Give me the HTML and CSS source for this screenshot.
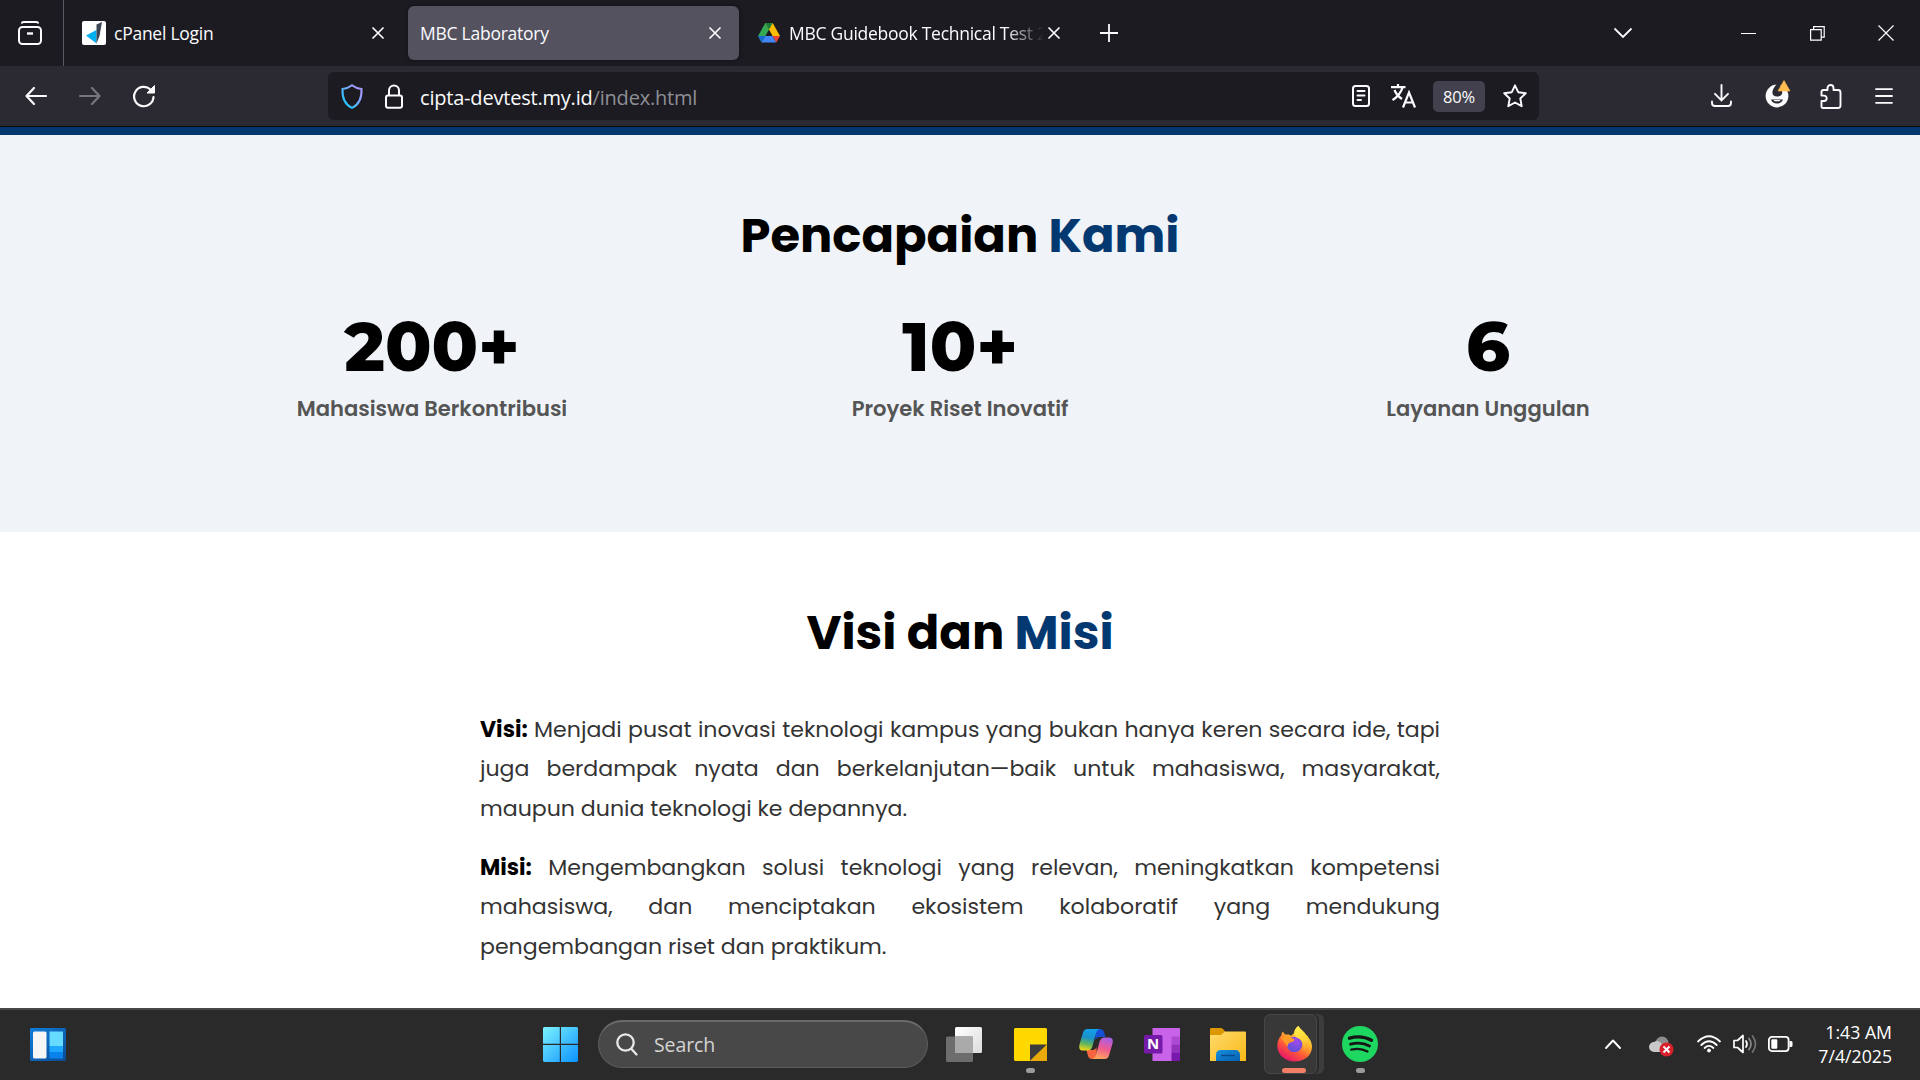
FILE: index.html
```html
<!DOCTYPE html>
<html lang="id">
<head>
<meta charset="utf-8">
<title>MBC Laboratory</title>
<link rel="stylesheet" href="styles.css">
</head>
<body>
<div class="screen">
  <div class="tabbar">
    <div class="view-btn">
      <svg width="24" height="24" viewBox="0 0 24 24" fill="none" stroke="#fbfbfe" stroke-width="2" stroke-linecap="round"><path d="M4 1.8Q4.5 1 6 1H18Q19.500 1 20 1.800"/><rect x="1" y="6" width="22" height="17" rx="3.500"/><path d="M9 12.500h6" stroke-width="2.400" stroke-linecap="butt"/></svg>
    </div>
    <div class="tab tab-cpanel">
      <svg width="24" height="24" viewBox="0 0 24 24"><rect width="24" height="24" rx="2" fill="#fff"/><path d="M4 14.500 14.500 9V22.500Z" fill="#00aef2"/><path d="M14.500 3.500 20 1 17.500 15 14.500 22.500Z" fill="#3c4654"/></svg>
      <span class="tab-title">cPanel Login</span>
      <svg class="tab-close" width="14" height="14" viewBox="0 0 14 14"><path d="M1.500 1.500l11 11M12.500 1.500l-11 11"/></svg>
    </div>
    <div class="tab tab-active">
      <span class="tab-title">MBC Laboratory</span>
      <svg class="tab-close" width="14" height="14" viewBox="0 0 14 14"><path d="M1.500 1.500l11 11M12.500 1.500l-11 11"/></svg>
    </div>
    <div class="tab tab-drive">
      <svg width="22" height="20" viewBox="0 0 22 20"><path d="M7.300 0 0 13 3.700 19.500 11 6.500Z" fill="#34a853"/><path d="M14.700 0 22 13H14.600L7.300 0Z" fill="#fbbc04"/><path d="M7.300 0H14.700L11 6.500Z" fill="#188038"/><path d="M0 13H7.400L3.700 19.500Z" fill="#1967d2"/><path d="M7.400 13H14.600L18.300 19.500H3.700Z" fill="#4285f4"/><path d="M14.600 13H22L18.300 19.500Z" fill="#ea4335"/></svg>
      <span class="tab-title tab-title-fade">MBC Guidebook Technical Test 2</span>
      <svg class="tab-close" width="14" height="14" viewBox="0 0 14 14"><path d="M1.500 1.500l11 11M12.500 1.500l-11 11"/></svg>
    </div>
    <svg class="new-tab" width="18" height="18" viewBox="0 0 18 18"><path d="M9 0v18M0 9h18"/></svg>
    <div class="window-btns">
      <svg width="20" height="12" viewBox="0 0 20 12" fill="none" stroke="#fbfbfe" stroke-width="1.800"><path d="M1.500 1.500 10 10l8.500-8.500"/></svg>
      <svg class="win-min" width="15" height="15" viewBox="0 0 15 15" fill="none" stroke="#fff" shape-rendering="crispEdges"><path d="M0 7.500h15"/></svg>
      <svg class="win-max" width="15" height="15" viewBox="0 0 15 15" fill="none" stroke="#fff" stroke-width="1.200"><path d="M.6 3.600h10.600v10.600H.6zM3.600 3.600V.6h10.600v10.600h-3"/></svg>
      <svg class="win-close" width="16" height="16" viewBox="0 0 16 16" fill="none" stroke="#fff" stroke-width="1.200"><path d="M.5.5l15 15M15.500.5l-15 15"/></svg>
    </div>
  </div>

  <div class="toolbar">
    <svg class="nav-back" width="22" height="18" viewBox="0 0 22 18"><path d="M9 1 1.500 9 9 17M1.500 9H21"/></svg>
    <svg class="nav-fwd" width="22" height="18" viewBox="0 0 22 18"><path d="M13 1l7.500 8L13 17M20.500 9H1"/></svg>
    <svg class="nav-reload" width="24" height="24" viewBox="0 0 24 24"><path d="M21.500 13A9.700 9.700 0 1 1 18.500 5.500" fill="none" stroke="#fbfbfe" stroke-width="2.200" stroke-linecap="round"/><path d="M22.500 1.500V9H15Z" fill="#fbfbfe" stroke="#fbfbfe" stroke-linejoin="round"/></svg>
    <div class="urlbar">
      <svg width="22" height="25" viewBox="0 0 22 25"><defs><linearGradient id="sh" x1="0" y1="1" x2="1" y2="0"><stop offset=".2" stop-color="#2ac3ff"/><stop offset=".8" stop-color="#a59bff"/></linearGradient></defs><path d="M11 1.200C8 3.500 5 4.600 1.500 5c-.4 9 2 15.500 9.500 18.800C18.500 20.500 20.900 14 20.500 5 17 4.600 14 3.500 11 1.200Z" fill="none" stroke="url(#sh)" stroke-width="2"/></svg>
      <svg class="lock" width="18" height="25" viewBox="0 0 18 25" fill="none" stroke="#fbfbfe" stroke-width="2"><rect x="1" y="11.500" width="16" height="12.300" rx="2"/><path d="M4 11V6.500a5 5 0 0 1 10 0V11"/></svg>
      <span class="url"><span class="host">cipta-devtest.my.id</span><span class="path">/index.html</span></span>
      <svg width="18" height="22" viewBox="0 0 18 22" fill="none" stroke="#fbfbfe" stroke-width="2" stroke-linecap="round"><rect x="1" y="1" width="16" height="20" rx="2.500"/><path d="M5.500 6h7M5.500 10.500h7M5.500 15h3.500"/></svg>
      <svg class="translate" width="25" height="24" viewBox="0 0 25 24" fill="none" stroke="#fbfbfe" stroke-width="2.200"><path d="M0 3.200h14.500M7 0v3.500M11.500 3.500C10.500 8 6 13.500 1.500 16M3.500 6C5 10 8 13 11 15"/><path d="M12 23.500 18 8.500l6 15M14.200 18.500h7.600"/></svg>
      <span class="zoom-chip">80%</span>
      <svg width="24" height="24" viewBox="0 0 24 24" fill="none" stroke="#fbfbfe" stroke-width="1.900" stroke-linejoin="round"><path d="M12 1.300 15.200 8.200 22.800 9.200 17.300 14.500 18.700 22.200 12 18.500 5.300 22.200 6.700 14.500 1.200 9.200 8.800 8.200Z"/></svg>
    </div>
    <div class="tools">
      <svg width="21" height="24" viewBox="0 0 21 24" fill="none" stroke="#fbfbfe" stroke-width="1.900" stroke-linecap="round"><path d="M10.500 1v15M4 9.800l6.500 6.500L17 9.800M1 17.500v1.500q0 3 3 3h13q3 0 3-3v-1.500"/></svg>
      <svg class="ext-g" width="26" height="28" viewBox="0 0 26 28"><circle cx="12" cy="16" r="11.400" fill="#fbfbfe"/><path d="M11.500 4 8.500 8.500C6 13.500 8 16.500 12 16.500s6-2.500 5-5L19 10 14 4Z" fill="#2b2a33"/><path d="M6 19.500h12q-1.500 4-6 4t-6-4Z" fill="#2b2a33"/><path d="M8.500 20h7l-1 1.300h-5Z" fill="#fbfbfe"/><path d="M19 .5 25 11H13Z" fill="#ffbd4f" stroke="#ffbd4f" stroke-width=".6" stroke-linejoin="round"/></svg>
      <svg class="ext-p" width="22" height="25" viewBox="0 0 22 25" fill="none" stroke="#fbfbfe" stroke-width="1.900" stroke-linejoin="round"><path d="M7.500 6V4a3 3 0 0 1 6 0v2H18q2.500 0 2.500 2.500v13Q20.500 24 18 24H3q-1.500 0-1.500-1.500V17H4a2.700 2.700 0 0 0 0-5.400H1.500V8Q1.500 6 3.500 6Z"/></svg>
      <svg class="menu" width="18" height="16" viewBox="0 0 18 16" stroke="#fbfbfe" stroke-width="1.800" stroke-linecap="round"><path d="M1 1.200h16M1 8h16M1 14.800h16"/></svg>
    </div>
  </div>

  <main class="page">
    <section class="stats">
      <h2 class="heading">Pencapaian <span class="accent">Kami</span></h2>
      <div class="stat-grid">
        <div class="stat"><div class="num">200+</div><div class="label">Mahasiswa Berkontribusi</div></div>
        <div class="stat"><div class="num">10+</div><div class="label">Proyek Riset Inovatif</div></div>
        <div class="stat"><div class="num">6</div><div class="label">Layanan Unggulan</div></div>
      </div>
    </section>
    <section class="vision">
      <h2 class="heading">Visi dan <span class="accent">Misi</span></h2>
      <p class="para"><strong>Visi:</strong> Menjadi pusat inovasi teknologi kampus yang bukan hanya keren secara ide, tapi juga berdampak nyata dan berkelanjutan—baik untuk mahasiswa, masyarakat, maupun dunia teknologi ke depannya.</p>
      <p class="para"><strong>Misi:</strong> Mengembangkan solusi teknologi yang relevan, meningkatkan kompetensi mahasiswa, dan menciptakan ekosistem kolaboratif yang mendukung pengembangan riset dan praktikum.</p>
    </section>
  </main>

  <footer class="taskbar">
    <svg class="widgets" width="36" height="33" viewBox="0 0 36 33"><defs><linearGradient id="wg" x1="0" y1="0" x2="1" y2="1"><stop stop-color="#0f7fdc"/><stop offset="1" stop-color="#0b4a94"/></linearGradient></defs><rect width="36" height="33" rx="1.500" fill="url(#wg)"/><rect x="3" y="3.500" width="13.500" height="27" rx="1.500" fill="#f6f6f6"/><path d="M19.500 3.500H33V18H19.500Z" fill="#67dbff"/><path d="M19.500 18H33v6H19.500Z" fill="#1ea7ff"/><path d="M19.500 24H33v6.500H19.500Z" fill="#0883ee"/></svg>
    <svg class="start" width="35" height="35" viewBox="0 0 35 35"><defs><linearGradient id="wn" gradientUnits="userSpaceOnUse" x1="0" y1="0" x2="35" y2="35"><stop stop-color="#7df3ff"/><stop offset="1" stop-color="#0a92ff"/></linearGradient></defs><path d="M1 0H16.800V16.800H0V1ZM18 0H34l1 1V16.800H18ZM0 18H16.800V35H1l-1-1ZM18 18H35V34l-1 1H18Z" fill="url(#wn)"/></svg>
    <div class="search">
      <svg width="22" height="23" viewBox="0 0 22 23" fill="none" stroke="#e8e8e8" stroke-width="2.300" stroke-linecap="round"><circle cx="9.500" cy="9.500" r="8.200"/><path d="M15.300 15.800 20.500 21.500"/></svg>
      <span>Search</span>
    </div>
    <div class="apps">
      <div class="app"><svg width="36" height="35" viewBox="0 0 36 35"><defs><linearGradient id="tv" x1="0" y1="0" x2="1" y2="1"><stop stop-color="#fff"/><stop offset="1" stop-color="#dcdcdc"/></linearGradient></defs><rect x="9" y="0" width="27" height="26" rx="1.500" fill="url(#tv)"/><rect x="0" y="9.500" width="27" height="25.500" rx="1.500" fill="#6d6d6d"/><path d="M9 9.500H27V26H9Z" fill="#aaa"/></svg></div>
      <div class="app"><svg width="33" height="33" viewBox="0 0 33 33"><path d="M1 0H32l1 1V33H1L0 32V1Z" fill="#ffd800"/><path d="M16 16.500H33L16 33Z" fill="#3b3b3b"/><path d="M33 16.500V33H16Z" fill="#e9a90b"/></svg><i class="dot"></i></div>
      <div class="app"><svg width="34" height="32" viewBox="0 0 34 32"><defs><linearGradient id="c1" x1=".5" y1="0" x2=".3" y2="1"><stop stop-color="#12a0ee"/><stop offset=".4" stop-color="#1b91c8"/><stop offset=".7" stop-color="#62b65c"/><stop offset="1" stop-color="#f3da17"/></linearGradient><linearGradient id="c2" x1=".7" y1="0" x2=".4" y2="1"><stop stop-color="#a45fe8"/><stop offset=".5" stop-color="#ef5a92"/><stop offset="1" stop-color="#ffa65a"/></linearGradient></defs><path d="M16 1h5q3 0 4 3l1.500 5h-6q-3 0-4 3Z" fill="#174fd4"/><path d="M18 31h-5q-3 0-4-3L7.500 22h6q3 0 4-3Z" fill="#f7663f"/><path d="M8.500 1H21q-3 .5-4 4L13.500 18q-1.200 4.500-5 4.500H4q-5 0-3.500-6L4 4.500Q5 1 8.500 1Z" fill="url(#c1)"/><path d="M25.500 31H13q3-.5 4-4L20.500 14q1.200-4.500 5-4.500H30q5 0 3.500 6L30 27.500Q29 31 25.500 31Z" fill="url(#c2)"/></svg></div>
      <div class="app"><svg width="36" height="33" viewBox="0 0 36 33"><path d="M8.500 0H36V33H8.500Z" fill="#c964ea"/><path d="M27.500 8.500H36V16.500H27.500Z" fill="#ad49d3"/><path d="M27.500 16.500H36V24.500H27.500Z" fill="#9332bd"/><path d="M27.500 24.500H36V33H27.500Z" fill="#7719aa"/><rect x="0" y="7" width="18.500" height="18.500" rx="1.500" fill="#761aa9"/><text class="one-n" x="9.200" y="21.300" text-anchor="middle">N</text></svg></div>
      <div class="app"><svg width="36" height="33" viewBox="0 0 36 33"><defs><linearGradient id="fo" x1="0" y1="0" x2="1" y2="1"><stop stop-color="#ffdb6e"/><stop offset="1" stop-color="#f9b815"/></linearGradient><linearGradient id="fb" x1="0" y1="0" x2="1" y2="1"><stop stop-color="#1490df"/><stop offset="1" stop-color="#0760b0"/></linearGradient></defs><path d="M0 1.200Q0 0 1.200 0H11q1 0 2 1l2.500 3V8H0Z" fill="#dd9700"/><path d="M0 7h11l4-3.500H35q1 0 1 1V33H0Z" fill="url(#fo)"/><path d="M6 33V27q0-5 5-5H25q5 0 5 5v6Z" fill="url(#fb)"/><path d="M11 27.500H25" stroke="#064b8d" stroke-width="1.500"/></svg></div>
      <div class="app"><span class="tile"></span><svg class="fx" width="35" height="36" viewBox="0 0 35 36"><defs><linearGradient id="f1" x1=".85" y1=".1" x2=".3" y2="1"><stop stop-color="#fff14a"/><stop offset=".35" stop-color="#ffb52b"/><stop offset=".65" stop-color="#ff5a38"/><stop offset="1" stop-color="#e3136b"/></linearGradient><radialGradient id="f2" cx=".6" cy=".25" r=".8"><stop stop-color="#a44bea"/><stop offset="1" stop-color="#5a50d8"/></radialGradient><linearGradient id="f3" x1=".4" y1="0" x2=".6" y2="1"><stop stop-color="#fff04a"/><stop offset=".6" stop-color="#ffd335"/><stop offset="1" stop-color="#ff9a2e"/></linearGradient></defs><path d="M21.500 0c1 3 6 5.500 7.500 9 1 0 2 1 2 2 3 3 4 7 4 10.500C34.500 30 27 35.500 17.500 35.500S.3 28.500.3 20C.3 15.500 2 12 4.200 9.500c.3-1.500.8-3 1.800-4 .5 1.500 1.500 2.500 3 3.200C11 8 13 8.500 14.500 10c0-1 1.200-2.200 2.700-3C17.500 4 19 1.500 21.500 0Z" fill="url(#f1)"/><circle cx="17.500" cy="18.500" r="7.800" fill="url(#f2)"/><path d="M4 12c3-2.500 7-2.500 9-1l4.500 2.500c0 1.500-2 2.500-4.500 3-1.500.5-2.500 2-2 4-2-1-4-5-7-8.500Z" fill="#ff9a26"/><path d="M21.500 0c1 3 6 5.500 7.500 9 2.500 5 1.500 13-2.500 16 .5-7-1.500-12-7-13.500-2-1.500-2.500-3-2.300-4.500C17.500 4 19 1.500 21.500 0Z" fill="url(#f3)"/></svg><i class="dot dot-active"></i></div>
      <div class="app"><svg width="36" height="36" viewBox="0 0 36 36"><circle cx="18" cy="18" r="18" fill="#1ed760"/><g fill="none" stroke="#161616" stroke-linecap="round"><path d="M7.500 12.200Q19.500 8.800 29.500 14.200" stroke-width="3.400"/><path d="M8.500 18.200Q19 15.200 27.500 20" stroke-width="2.800"/><path d="M9.300 23.700Q18 21.300 25.500 25.500" stroke-width="2.300"/></g></svg><i class="dot"></i></div>
    </div>
    <div class="tray">
      <svg width="16" height="10" viewBox="0 0 16 10" fill="none" stroke="#fff" stroke-width="1.900" stroke-linecap="round" stroke-linejoin="round"><path d="M1 9 8 1.500 15 9"/></svg>
      <svg class="cloud" width="25" height="21" viewBox="0 0 25 21"><circle cx="13" cy="7" r="6.500" fill="#8d8d8d"/><path d="M5 16a5 5 0 0 1 0-10 6 6 0 0 1 8.500 2.500L17 16Z" fill="#c9c9c9"/><circle cx="17.500" cy="13.500" r="7" fill="#d9212c"/><path d="M14.500 10.500l6 6M20.500 10.500l-6 6" stroke="#fff" stroke-width="1.900"/></svg>
      <svg class="wifi" width="24" height="18" viewBox="0 0 24 18" fill="none" stroke="#fff" stroke-width="1.800" stroke-linecap="round"><path d="M1 6.500Q12-4 23 6.500M4.300 10Q12 2.500 19.700 10M7.600 13Q12 8.800 16.400 13"/><circle cx="12" cy="15.500" r="1.500" fill="#fff" stroke-width="1"/></svg>
      <svg class="speaker" width="24" height="20" viewBox="0 0 24 20" fill="none" stroke="#fff" stroke-width="1.700" stroke-linecap="round" stroke-linejoin="round"><path d="M1 6.500h3.500L10 1.500v17l-5.500-5H1Z"/><path d="M13 7q2 3 0 6"/><path d="M16 4.500q4 5.500 0 11" stroke-opacity=".45"/><path d="M19.500 2q6 8 0 16" stroke-opacity=".35"/></svg>
      <svg class="battery" width="25" height="16" viewBox="0 0 25 16"><rect x=".9" y=".9" width="19.700" height="14.200" rx="3" fill="none" stroke="#fff" stroke-width="1.800"/><rect x="3.300" y="3.300" width="6" height="9.400" rx="1" fill="#fff"/><path d="M21.500 5h1.500q1.500 0 1.500 1.500v3q0 1.500-1.500 1.500h-1.500Z" fill="#fff"/></svg>
      <div class="clock"><div>1:43 AM</div><div>7/4/2025</div></div>
    </div>
  </footer>
</div>
</body>
</html>
```
FILE: styles.css
```css
* { box-sizing: border-box; }
body { margin: 0; font-family: "Segoe UI", "Open Sans", "Noto Sans", sans-serif; }
svg { display: block; flex: none; overflow: visible; }
.screen { width: 1920px; height: 1080px; display: flex; flex-direction: column; overflow: hidden; background: #fff; }

/* Tab strip */
.tabbar { height: 66px; flex: none; display: flex; align-items: center; background: #1c1b22; color: #fbfbfe; }
.view-btn { width: 64px; height: 66px; padding-left: 18px; border-right: 1px solid #5b5b66; display: flex; align-items: center; }
.tab { height: 54px; display: flex; align-items: center; border-radius: 6px; font-size: 17.500px; letter-spacing: -.25px; }
.tab-title { flex: 1; padding-left: 8px; white-space: nowrap; line-height: 26px; }
.tab-title-fade { padding-left: 9px; letter-spacing: -.27px; -webkit-mask-image: linear-gradient(90deg, #000 225px, transparent 264px); mask-image: linear-gradient(90deg, #000 225px, transparent 264px); }
.tab-close { stroke: #fbfbfe; stroke-width: 1.700; fill: none; }
.tab-cpanel { width: 344px; padding: 0 23px 0 18px; }
.tab-active { width: 331px; padding: 0 17px 0 4px; background: #54525f; box-shadow: 0 0 4px rgba(0,0,0,.5); }
.tab-drive { width: 339px; padding: 0 18px 0 19px; }
.new-tab { margin-left: 22px; stroke: #fbfbfe; stroke-width: 1.800; }
.window-btns { margin-left: auto; padding-right: 26px; display: flex; align-items: center; }
.win-min { margin-left: 108px; }
.win-max { margin-left: 54px; }
.win-close { margin-left: 53px; }

/* Navigation bar */
.toolbar { height: 61px; flex: none; display: flex; align-items: center; background: #2b2a33; border-bottom: 1px solid #0c0c0d; color: #fbfbfe; }
.nav-back, .nav-fwd { fill: none; stroke: #fbfbfe; stroke-width: 2.200; stroke-linecap: round; stroke-linejoin: round; }
.nav-back { margin-left: 25px; }
.nav-fwd { margin-left: 32px; stroke: #77767e; }
.nav-reload { margin-left: 31px; }
.urlbar { width: 1211px; height: 48px; margin-left: 172px; padding: 0 12px 0 13px; display: flex; align-items: center; background: #1c1b22; border-radius: 6px; }
.lock { margin-left: 22px; }
.url { flex: 1; padding: 3px 0 0 17px; font-size: 20px; letter-spacing: -.2px; line-height: 28px; }
.path { color: #8f8f96; }
.translate { margin-left: 21px; }
.zoom-chip { width: 52px; height: 31px; margin: 0 18px 0 17px; border-radius: 5px; background: #42414d; font-size: 16.500px; line-height: 32px; text-align: center; letter-spacing: -.2px; }
.tools { flex: 1; display: flex; align-items: center; padding-left: 172px; }
.ext-g { margin: 0 0 4px 33px; }
.ext-p { margin-left: 29px; }
.menu { margin-left: 33px; }

/* Page content */
.page { flex: 1; border-top: 8px solid #023770; font-family: Poppins, Inter, "Open Sans", sans-serif; color: #000; min-height: 0; }
.stats { height: 397px; padding-top: 65px; background: #f0f4f8; }
.heading { margin: 0; font-size: 48px; line-height: 72px; font-weight: 700; text-align: center; }
.accent { color: #033871; }
.stat-grid { width: 1536px; margin: 40px auto 0; display: grid; grid-template-columns: repeat(3, 1fr); gap: 48px; text-align: center; }
.num { font-family: Montserrat, Poppins, Inter, sans-serif; font-size: 68px; line-height: 70px; font-weight: 800; }
.label { margin-top: 9px; font-size: 21.100px; line-height: 36px; font-weight: 600; color: #555; }
.vision { width: 960px; margin: 0 auto; padding-top: 65px; }
.para { margin: 0 0 19.200px; font-size: 22.080px; line-height: 39.600px; color: #333; text-align: justify; }
.heading + .para { margin-top: 40.600px; }
.para strong { color: #000; }

/* Taskbar */
.taskbar { height: 72px; flex: none; display: flex; align-items: center; background: #2a2a2a; box-shadow: inset 0 2px #494949; color: #fff; }
.widgets { margin-left: 30px; }
.start { margin-left: 477px; }
.search { width: 330px; height: 48px; margin-left: 20px; padding-left: 17px; display: flex; align-items: center; gap: 16px; border-radius: 24px; background: #484848; border: 1px solid #5c5c5c; border-top: 2px solid #6a6a6a; font-size: 19.500px; letter-spacing: -.1px; color: #d4d4d4; }
.apps { display: flex; margin-left: 3px; }
.app { width: 66px; height: 72px; position: relative; display: flex; align-items: center; justify-content: center; }
.dot { position: absolute; left: 29px; top: 60px; width: 9px; height: 5px; border-radius: 3px; background: #9b9b9b; }
.dot-active { left: 21px; width: 24px; background: #f47f66; }
.tile { position: absolute; left: 3px; top: 6px; width: 53px; height: 60px; border-radius: 6px; background: #383838; border: 1px solid #474747; box-shadow: 2px 0 #2a2a2a, 7px 0 #3d3d3d; }
.fx { position: relative; }
.one-n { font: 700 15px "Open Sans", sans-serif; fill: #fff; }
.tray { margin-left: auto; padding-right: 28px; display: flex; align-items: center; }
.cloud { margin: 4px 0 0 28px; }
.wifi { margin-left: 23px; }
.speaker { margin-left: 12px; }
.battery { margin-left: 11px; }
.clock { width: 99px; padding-bottom: 1px; font-size: 17.700px; line-height: 24px; text-align: right; }
```
